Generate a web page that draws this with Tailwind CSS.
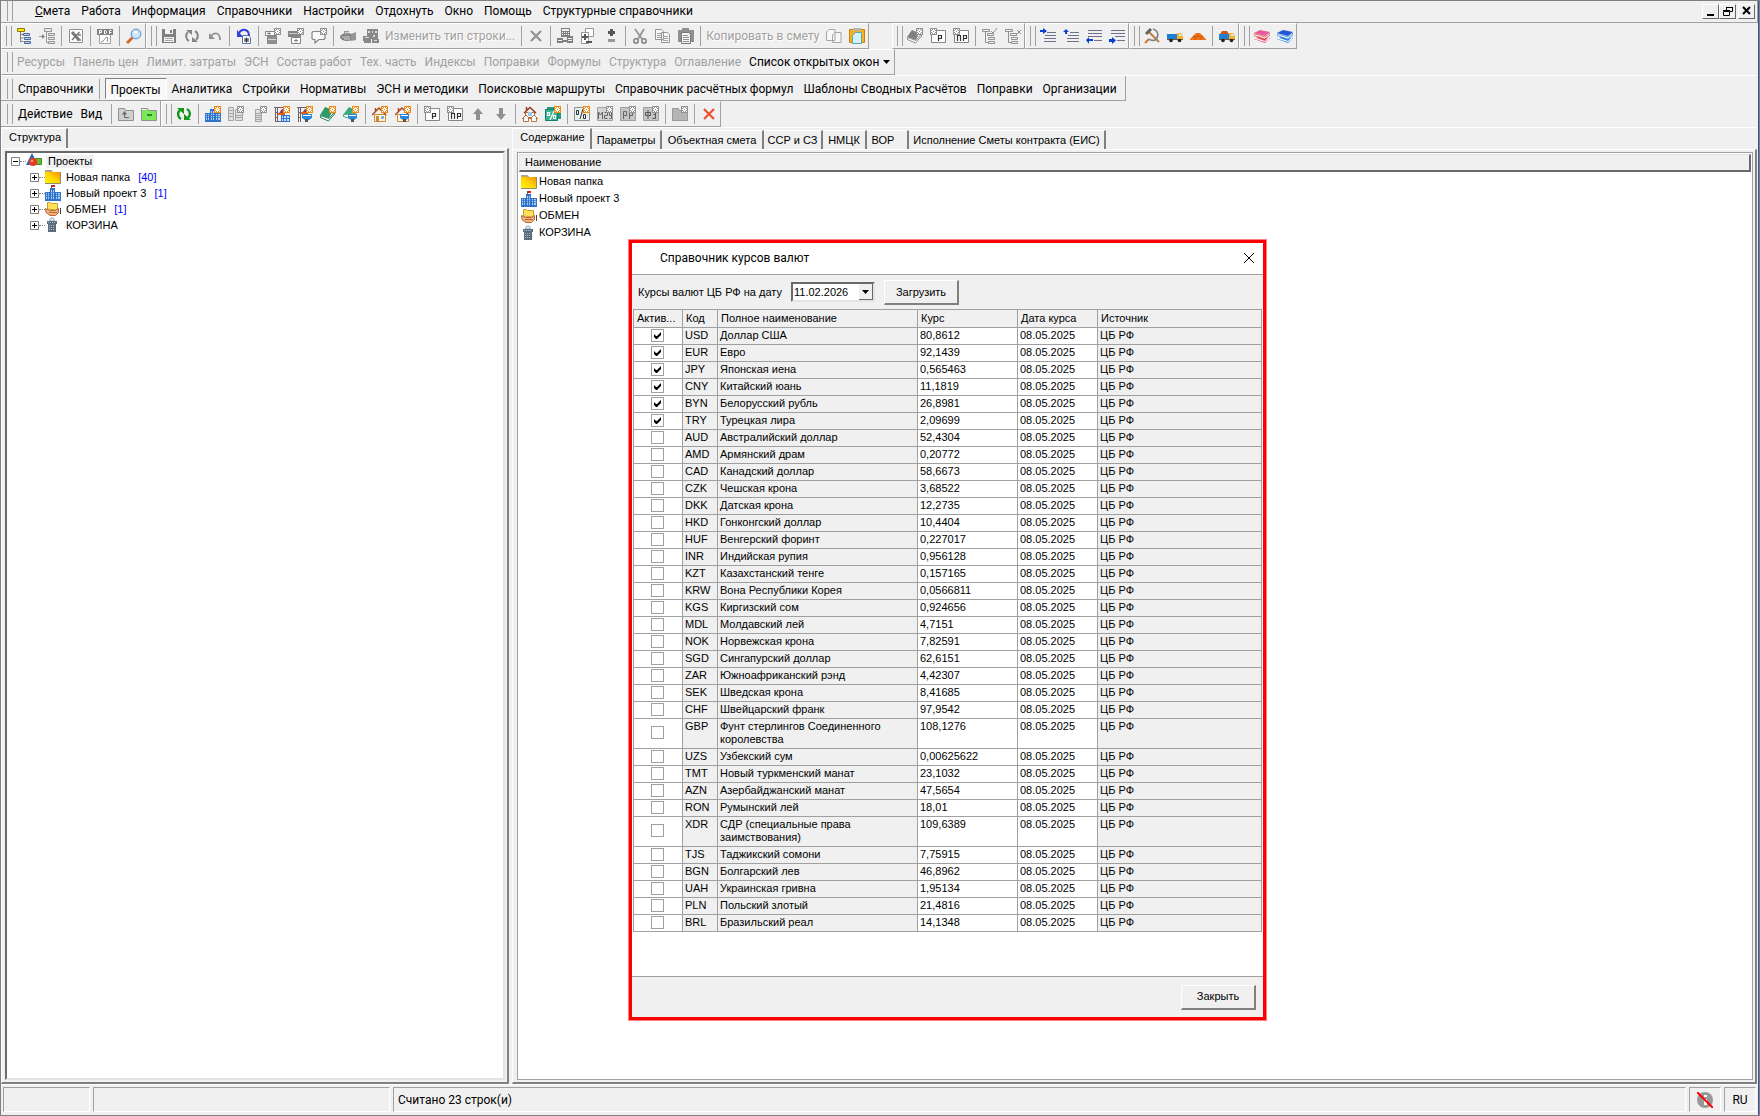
<!DOCTYPE html>
<html lang="ru">

<head>
    <meta charset="UTF-8">
    <meta name="viewport" content="width=device-width, initial-scale=1.0">
    <title>Справочник курсов валют</title>
    <script src="https://cdn.jsdelivr.net/npm/@tailwindcss/browser@4"></script>
</head>

<body class="relative h-screen flex flex-col overflow-hidden bg-[#f0f0f0] text-black border-t border-l border-b border-[#808080] font-[Roboto,'Noto_Sans',sans-serif] text-xs">
    <!-- Icon set -->
    <svg class="absolute size-0" xmlns="http://www.w3.org/2000/svg">
        <symbol id="badge" viewBox="0 0 16 16"><path fill="#f08a10" d="M9 0h7v7H9z"/><path fill="#fff" d="M10 1h1v1h-1zM14 1h1v1h-1zM10 5h1v1h-1zM14 5h1v1h-1zM12 1h1v1h1v1h1v1h-1v1h-1v1h-1v-1h-1v-1h-1v-1h1v-1h1z"/><path fill="#f08a10" d="M12 3h1v1h-1z"/></symbol>
        <symbol id="badge-gray" viewBox="0 0 16 16"><path fill="#929292" d="M9 0h7v7H9z"/><path fill="#fff" d="M10 1h1v1h-1zM14 1h1v1h-1zM10 5h1v1h-1zM14 5h1v1h-1zM12 1h1v1h1v1h1v1h-1v1h-1v1h-1v-1h-1v-1h-1v-1h1v-1h1z"/><path fill="#929292" d="M12 3h1v1h-1z"/></symbol>
        <symbol id="badge-left" viewBox="0 0 16 16"><path fill="#929292" d="M0 0h7v7H0z"/><path fill="#fff" d="M1 1h1v1H1zM5 1h1v1H5zM1 5h1v1H1zM5 5h1v1H5zM3 1h1v1h1v1h1v1H5v1H4v1H3V5H2V4H1V3h1V2h1z"/><path fill="#929292" d="M3 3h1v1H3z"/></symbol>
        <symbol id="tree" viewBox="0 0 16 16"><path fill="#ffe900" stroke="#8a7a10" d="M1.500 .5h7v3h-7z"/><path fill="none" stroke="#808080" d="M4.500 4v9.500h3M4.500 6.500h3M4.500 10h3"/><path fill="#b9d2f5" stroke="#4b6a9a" d="M7.500 5.500h6v2h-6zM8.500 9.500h6v2h-6zM8.500 13.500h6v2h-6z"/></symbol>
        <symbol id="tree-add" viewBox="0 0 16 16"><path fill="#e8e8e8" stroke="#959595" d="M5.500 .5h7v3h-7zM9.500 5.500h6v2h-6zM9.500 9.500h6v2h-6zM9.500 13.500h6v2h-6z"/><path fill="none" stroke="#959595" d="M7.500 4v10.500h2M0 8.500h5"/><path fill="#808080" d="M3 6l3 2.500L3 11z"/></symbol>
        <symbol id="xls" viewBox="0 0 16 16"><path fill="#fff" stroke="#909090" d="M1.500 1.500h13v13h-13z"/><path stroke="#777" stroke-width="3" d="M4 4l7 8"/><path stroke="#777" stroke-width="1.500" d="M11.500 4L4 12M9 12h4M10 7h3"/></symbol>
        <symbol id="pdf" viewBox="0 0 16 16"><path fill="#fff" stroke="#a0a0a0" d="M2.500 5.500h11v10h-11z"/><path fill="#808080" d="M0 1h16v6H0z"/><path fill="none" stroke="#fff" d="M2.500 6V2.500h2v2h-2M7.500 6V2.500h1l1 1v1l-1 1h-1M12.500 6V2.500h2M12.500 4.500h2"/><path fill="none" stroke="#888" d="M4 14c3 0 4-5 6-5s-1 5 1 5"/></symbol>
        <symbol id="find" viewBox="0 0 16 16"><path stroke="#d06a28" stroke-width="3" d="M1 15l6-6"/><circle cx="10" cy="6" r="4.700" fill="#cfe6fb" stroke="#7aa6d8" stroke-width="1.500"/><path fill="#fff" d="M8 3h3v2H8z"/></symbol>
        <symbol id="save" viewBox="0 0 16 16"><path fill="#808080" d="M1 1h14v14H1z"/><path fill="#f4f4f4" d="M4 1h8v5H4zM3 9h10v5H3z"/><path fill="#808080" d="M9 2h2v3H9z"/><path fill="#a8a8a8" d="M4 10h8v1H4zM4 12h8v1H4z"/></symbol>
        <symbol id="refresh-gray" viewBox="0 0 16 16"><path fill="none" stroke="#858585" stroke-width="2" d="M5 13A5.500 5.500 0 0 1 4 4M11 3a5.500 5.500 0 0 1 1 9"/><path fill="#858585" d="M2 2h6v5zM14 14H8V9z"/></symbol>
        <symbol id="refresh" viewBox="0 0 16 16"><path fill="none" stroke="#17961c" stroke-width="2.400" d="M5 13A5.500 5.500 0 0 1 4 4M11 3a5.500 5.500 0 0 1 1 9"/><path fill="#17961c" d="M1 2h7v6zM15 14H8V8z"/></symbol>
        <symbol id="undo" viewBox="0 0 16 16"><path fill="none" stroke="#909090" stroke-width="1.800" d="M4 8c3-4 9-4 9 4"/><path fill="#909090" d="M2 5v6h6z"/></symbol>
        <symbol id="undo-doc" viewBox="0 0 16 16"><path fill="#fff" stroke="#5577aa" d="M6.500 7.500h6l2 2v6h-8z"/><path stroke="#333" d="M8.500 10l4 4M12.500 10l-4 4M10.500 9.500v5M8 12h5"/><path fill="none" stroke="#3040d8" stroke-width="2" d="M3 5c3-5 10-4 10 3"/><path fill="#3040d8" d="M1 2v7h6z"/></symbol>
        <symbol id="rows-top" viewBox="0 0 16 16"><path fill="#fff" stroke="#858585" d="M.5 3.500h11v4H.5z"/><path stroke="#858585" d="M2 5.500h4M4 4v3"/><path fill="#909090" stroke="#858585" d="M2.500 8.500h9v7h-9z"/><path stroke="#d8d8d8" d="M3 11.500h8"/><use href="#badge-gray"/></symbol>
        <symbol id="rows-sub" viewBox="0 0 16 16"><path fill="#858585" d="M0 3h13v6H0z"/><path stroke="#c8c8c8" d="M1 5.500h11"/><path fill="#fff" stroke="#858585" d="M3.500 9.500h9v6h-9z"/><path stroke="#858585" d="M6 12.500h4M8 10.500v4"/><use href="#badge-gray"/></symbol>
        <symbol id="note" viewBox="0 0 16 16"><path fill="#f8f8f8" stroke="#858585" stroke-width="1.200" d="M2 3.500h11l1 1v6l-1 1H8L4 15v-3.500H2l-1-1v-6z"/><use href="#badge-gray"/></symbol>
        <symbol id="helmet" viewBox="0 0 16 16"><ellipse cx="7" cy="9" rx="7" ry="4" fill="#808080"/><path fill="#959595" d="M4 3h5v4H4zM11 6l5-2v8l-5 1z"/><path stroke="#d8d8d8" d="M2 9h8M4 11h6M5 4.500h4"/></symbol>
        <symbol id="works" viewBox="0 0 16 16"><path fill="#888" d="M4 1h11v10H4zM0 8h8v5H0zM9 11h7v4H9zM1 13h7v2H1z"/><path fill="#ddd" d="M5 3h2v2H5zM9 3h1v2H9zM12 3h2v2h-2zM10 7h2v2h-2zM2 9h4v1H2zM11 12h3v1h-3z"/></symbol>
        <symbol id="cross-gray" viewBox="0 0 16 16"><path stroke="#909090" stroke-width="2" d="M3 3l10 10M13 3L3 13"/></symbol>
        <symbol id="cross-red" viewBox="0 0 16 16"><path stroke="#ee4f30" stroke-width="2.200" d="M3 3l10 10M13 3L3 13"/></symbol>
        <symbol id="calc" viewBox="0 0 16 16"><path fill="#808080" d="M4 0h9v9H4zM0 10h6v5H0zM10 8h6v7h-6zM6 12h4v2H6z"/><path fill="#f0f0f0" d="M5 1h7v2H5zM5 4h1v1H5zM7 4h1v1H7zM9 4h1v1H9zM11 4h1v1h-1zM5 6h1v1H5zM7 6h1v1H7zM9 6h1v1H9zM11 6h1v1h-1zM1 12h4v1H1zM11 10h4v1h-4zM11 12h4v1h-4z"/></symbol>
        <symbol id="doc-pm" viewBox="0 0 16 16"><path fill="#fff" stroke="#959595" d="M5.500 .5h8v8h-8z"/><path fill="#fff" stroke="#959595" d="M1.500 4.500h7v11h-7z"/><path stroke="#555" stroke-width="2" d="M2 9h6M5 6v6M6 14h6"/></symbol>
        <symbol id="plus-minus" viewBox="0 0 16 16"><path fill="#555" d="M7 1h3v2h2v3h-2v2H7V6H5V3h2z"/><path fill="#999" d="M5 11h7v3H5z"/></symbol>
        <symbol id="cut" viewBox="0 0 16 16"><path stroke="#959595" stroke-width="1.800" d="M3 1l7 10M12 1L6 11"/><g fill="none" stroke="#808080" stroke-width="1.500"><circle cx="4" cy="13" r="2.200"/><circle cx="12" cy="13" r="2.200"/></g></symbol>
        <symbol id="copy" viewBox="0 0 16 16"><path fill="#f8f8f8" stroke="#959595" d="M.5 1.500h6l2 2v8h-8zM6.500 4.500h6l2 2v8h-8z"/><path stroke="#a0a0a0" d="M2 5.500h4M2 7.500h4M2 9.500h4M8 8.500h5M8 10.500h5M8 12.500h5"/></symbol>
        <symbol id="paste-gray" viewBox="0 0 16 16"><path fill="#909090" d="M0 2h4V0h7v2h5v12H0z"/><path fill="#f4f4f4" stroke="#777" d="M3.500 4.500h7l2 2v9h-9z"/><path stroke="#909090" d="M5 7.500h5M5 9.500h6M5 11.500h6M5 13.500h6"/></symbol>
        <symbol id="copy-plain" viewBox="0 0 16 16"><path fill="#f8f8f8" stroke="#a5a5a5" d="M.5 4l2.500-2.500h6v11H.5zM6.500 7l2.500-2.500h6v10H6.500z"/></symbol>
        <symbol id="paste" viewBox="0 0 16 16"><path fill="#f7b11c" stroke="#c9820c" d="M.5 1.500h15v13H.5z"/><path fill="#b8b8a8" d="M4 0h8v3H4z"/><path fill="#d4f2f6" stroke="#5aa7b8" d="M3.500 7.500l3-3h6v11h-9z"/></symbol>
        <symbol id="book-gray" viewBox="0 0 16 16"><path fill="#808080" d="M5 2l7 3-3 7-9-3z"/><path fill="#fff" stroke="#909090" d="M.5 9.500v2l8 3.500 6-7v-2L9 12.500z"/><use href="#badge-gray"/></symbol>
        <symbol id="box-p" viewBox="0 0 16 16"><path fill="#fff" stroke="#858585" d="M1.500 2.500h14v12h-14z"/><path fill="none" stroke="#333" stroke-width="1.200" d="M8.500 13V7.500h3v3h-3"/><use href="#badge-left"/></symbol>
        <symbol id="box-pr" viewBox="0 0 16 16"><path fill="#fff" stroke="#858585" d="M1.500 2.500h14v12h-14z"/><path fill="none" stroke="#333" stroke-width="1.200" d="M4.500 13V7.500h3V13M10.500 13V7.500h3v3h-3"/><use href="#badge-left"/></symbol>
        <symbol id="tree-ok" viewBox="0 0 16 16"><path fill="#f4f4f4" stroke="#909090" d="M.5 1.500h7v2h-7zM5.500 5.500h6v2h-6zM6.500 9.500h6v2h-6zM6.500 13.500h6v2h-6z"/><path fill="none" stroke="#909090" d="M3.500 4v10.500h3M9 3l2 2 4-5"/></symbol>
        <symbol id="tree-no" viewBox="0 0 16 16"><path fill="#f4f4f4" stroke="#909090" d="M.5 1.500h7v2h-7zM5.500 5.500h6v2h-6zM6.500 9.500h6v2h-6zM6.500 13.500h6v2h-6z"/><path fill="none" stroke="#909090" d="M3.500 4v10.500h3M12 2l4 4M16 2l-4 4"/></symbol>
        <symbol id="ln-1" viewBox="0 0 16 16"><path stroke="#70708a" d="M7 4.500h9M5 7.500h11M4 10.500h12M4 13.500h12"/><path fill="#0a3fd0" d="M0 2h3V0l4 3-4 3V4H0z"/></symbol>
        <symbol id="ln-2" viewBox="0 0 16 16"><path stroke="#70708a" d="M7 4.500h9M5 7.500h11M4 10.500h12M4 13.500h12"/><path fill="#0a3fd0" d="M3 1l3 3H4v2H2V4H0z"/></symbol>
        <symbol id="ln-3" viewBox="0 0 16 16"><path stroke="#70708a" d="M2 2.500h14M2 5.500h14M2 8.500h14M8 12.500h8"/><path fill="#0a3fd0" d="M0 12l3-3v2h4v2H3v3z"/></symbol>
        <symbol id="ln-4" viewBox="0 0 16 16"><path stroke="#70708a" d="M2 2.500h14M2 5.500h14M6 8.500h10M8 12.500h8"/><path fill="#0a3fd0" d="M7 12.500L3 9v2H0v3h3v2z"/></symbol>
        <symbol id="tools" viewBox="0 0 16 16"><path stroke="#c47a3a" stroke-width="2" d="M5 4l10 10"/><path fill="none" stroke="#7c8488" stroke-width="1.600" d="M9 1c6 2 6 8 2 11-2 1-5 0-6-1"/><path stroke="#5c6468" stroke-width="3" d="M2 6l5-5"/><path stroke="#c47a3a" stroke-width="2" d="M5 11l-4 4"/></symbol>
        <symbol id="truck" viewBox="0 0 16 16"><path fill="#1f7fd6" d="M0 6h10v5H0z"/><path fill="#f6b42c" d="M10 5h4l2 3v3h-6z"/><path fill="#cfeaff" d="M12 6h2l1 2h-3z"/><path fill="#7d5a20" d="M0 11h16v1H0z"/><g fill="#222"><circle cx="4" cy="12.500" r="1.800"/><circle cx="12.500" cy="12.500" r="1.800"/></g></symbol>
        <symbol id="bricks" viewBox="0 0 16 16"><path fill="#ee7417" d="M6 5h4l3 3 3 3v1H0v-1l3-3z"/><path stroke="#c85a10" d="M3 8.500h10M8 6v2M5 9v3M11 9v3"/></symbol>
        <symbol id="truck-load" viewBox="0 0 16 16"><path fill="#c85a18" d="M1 6l2-3h5l2 3z"/><path fill="#1f7fd6" d="M0 6h10v5H0z"/><path fill="#f6b42c" d="M10 5h4l2 3v3h-6z"/><path fill="#cfeaff" d="M12 6h2l1 2h-3z"/><path fill="#7d5a20" d="M0 11h16v1H0z"/><g fill="#222"><circle cx="4" cy="12.500" r="1.800"/><circle cx="12.500" cy="12.500" r="1.800"/></g></symbol>
        <symbol id="books-red" viewBox="0 0 16 16"><path fill="#e84a68" d="M6 8l10 2-5 5-11-4z"/><path fill="#fff" d="M1 9.500l10 3.500 4-4v2l-4 3-10-3z"/><path fill="#e45a9a" d="M6 2l10 2-5 4L0 5z"/><path fill="#fff" stroke="#e04848" stroke-width=".8" d="M0 5.500L11 9l5-4v2l-5 4L0 7.500z"/></symbol>
        <symbol id="books-blue" viewBox="0 0 16 16"><path fill="#2a8ae0" d="M6 8l10 2-5 5-11-4z"/><path fill="#fff" d="M1 9.500l10 3.500 4-4v2l-4 3-10-3z"/><path fill="#2456d8" d="M6 2l10 2-5 4L0 5z"/><path fill="#fff" stroke="#3a8ad8" stroke-width=".8" d="M0 5.500L11 9l5-4v2l-5 4L0 7.500z"/></symbol>
        <symbol id="folder-up" viewBox="0 0 16 16"><path fill="#cfcfcf" stroke="#909090" d="M.5 14.500v-12h6l1 2h8v10z"/><path fill="none" stroke="#666" d="M11 11.500H6.500V8"/><path fill="#666" d="M6.500 5L9 8.500H4z"/></symbol>
        <symbol id="folder-green" viewBox="0 0 16 16"><path fill="#7be85a" stroke="#909090" d="M.5 14.500v-12h6l1 2h8v10z"/><path fill="#f4f4f4" d="M1 3h5v1H1z"/><path stroke="#20602a" stroke-width="1.500" d="M6 9h5"/></symbol>
        <symbol id="city" viewBox="0 0 16 16"><path fill="#2f74cc" d="M0 7h5v9H0zM5 3h5v13H5zM10 7h6v9h-6z"/><path fill="#a9cdf6" d="M1 8h1v6H1zM3 8h1v6H3zM6 5h1v9H6zM8 5h1v9H8zM11 8h1v6h-1zM13 8h2v6h-2z"/><path stroke="#2f74cc" stroke-width=".7" d="M0 9.500h16M0 11.500h16M5 7.500h5"/></symbol>
        <symbol id="project" viewBox="0 0 16 16"><use href="#city"/><path fill="#555" d="M6 0h1v3H6z"/><path fill="#e01818" d="M7 0h3v2H7z"/></symbol>
        <symbol id="city-new" viewBox="0 0 16 16"><use href="#city"/><use href="#badge"/></symbol>
        <symbol id="blocks" viewBox="0 0 16 16"><path fill="#e0e0e0" stroke="#a5a5a5" d="M.5 1.500h5v13h-5zM7.500 3.500h7v11h-7z"/><path stroke="#a5a5a5" d="M1 4.500h4M1 7.500h4M1 10.500h4M8 9.500h6M8 11.500h6"/><use href="#badge-gray"/></symbol>
        <symbol id="block" viewBox="0 0 16 16"><path fill="#e0e0e0" stroke="#a5a5a5" d="M4.500 3.500h6v12h-6z"/><path stroke="#a5a5a5" d="M5 7.500h5M5 9.500h5M5 11.500h5M5 13.500h5"/><use href="#badge-gray"/></symbol>
        <symbol id="crane" viewBox="0 0 16 16"><path fill="none" stroke="#70606a" d="M1.500 1v15M3.500 1v15M0 1.500h10M1 5l3 3M1 10l3 3M2 15.500h6"/><path fill="#8e3a70" d="M5 7l3-4h2v4z"/><path fill="#e0611a" d="M4 7h7v2H4z"/><path fill="#2f74cc" d="M7 9h9v7H7z"/><path fill="#cfe2fa" d="M8 10h1v2H8zM10 10h2v2h-2zM13 10h2v2h-2zM8 13h1v2H8zM10 13h2v2h-2zM13 13h2v2h-2z"/><use href="#badge"/></symbol>
        <symbol id="crane-db" viewBox="0 0 16 16"><path fill="none" stroke="#70606a" d="M1.500 1v15M3.500 1v15M0 1.500h10M1 5l3 3M1 10l3 3"/><path fill="#8e3a70" d="M5 7l3-4h2v4z"/><path fill="#e0611a" d="M4 6h7v2H4z"/><path fill="#2888e0" d="M5 8h10v4l-3 2H8l-3-2z"/><path fill="#fff" d="M6 9h8v1H6z"/><path fill="#555" d="M8 13h3v3H8z"/><use href="#badge"/></symbol>
        <symbol id="book" viewBox="0 0 16 16"><path fill="#2e9a6a" d="M5 1l8 3-4 8-9-3z"/><path fill="#fff" stroke="#228055" d="M.5 9.500v2l8 3.500 6-7v-2L9 12.500z"/><use href="#badge"/></symbol>
        <symbol id="book-db" viewBox="0 0 16 16"><path fill="#3aa878" d="M6 1l6 3-3 5-9 0z"/><path fill="#fff" stroke="#3aa878" d="M.5 8.500v2l7 2 5-5z"/><path fill="#2888e0" d="M5 8h9v4l-3 2H8l-3-2z"/><path fill="#fff" d="M6 9h7v1H6z"/><path fill="#555" d="M8 13h3v3H8z"/><use href="#badge"/></symbol>
        <symbol id="house" viewBox="0 0 16 16"><path fill="#fff6dc" stroke="#c98a3a" d="M2.500 8.500h11v7h-11z"/><path fill="none" stroke="#a84820" stroke-width="1.500" d="M0 9l7-7 7 7M3.500 2v3"/><path fill="#c98a3a" d="M4 10h3v6H4z"/><path fill="#7ab4ea" d="M9 10h3v3H9z"/><use href="#badge"/></symbol>
        <symbol id="house-db" viewBox="0 0 16 16"><path fill="#fff6dc" stroke="#c98a3a" d="M2.500 8.500h11v7h-11z"/><path fill="none" stroke="#a84820" stroke-width="1.500" d="M0 9l7-7 7 7M3.500 2v3"/><path fill="#2888e0" d="M5 8h9v4l-3 2H8l-3-2z"/><path fill="#fff" d="M6 9h7v1H6z"/><path fill="#555" d="M8 13h3v3H8z"/><use href="#badge"/></symbol>
        <symbol id="up" viewBox="0 0 16 16"><path fill="#909090" d="M8 2l5 6h-3v6H6V8H3z"/></symbol>
        <symbol id="down" viewBox="0 0 16 16"><path fill="#909090" d="M8 14L3 8h3V2h4v6h3z"/></symbol>
        <symbol id="houses" viewBox="0 0 16 16"><path fill="#fff" stroke="#b8743c" d="M3.500 6.500h9v5h-9z"/><path fill="none" stroke="#8e3a20" stroke-width="1.500" d="M2 7l6-5.500L14 7M4.500 1v3"/><path fill="#9ac8f0" d="M6 6h4v4H6z"/><path fill="#fff" stroke="#b8743c" d="M1.500 12v3.500h5V12M9.500 12v3.500h5V12M0 13l4-4 4 4 4-4 4 4"/></symbol>
        <symbol id="pct-green" viewBox="0 0 16 16"><path fill="#1f9a80" d="M2 1h14v12H2z"/><path fill="#38b498" stroke="#14806a" d="M.5 3.500h12v11H.5z"/><path stroke="#fff" stroke-width="1.200" fill="none" d="M9 5l-4 9M2.500 6.500h2v3h-2zM8.500 9.500h2v3h-2z"/><use href="#badge"/></symbol>
        <symbol id="pct" viewBox="0 0 16 16"><path fill="#e4f2f2" stroke="#909090" d="M.5 1.500h15v13H.5z"/><path stroke="#333" fill="none" d="M9 3l-3 10M2.500 4.500h2v4h-2zM9.500 8.500h2v4h-2z"/><use href="#badge"/></symbol>
        <symbol id="m29" viewBox="0 0 16 16"><path fill="#d4d4d4" stroke="#a0a0a0" d="M.5 1.500h15v13H.5z"/><path fill="none" stroke="#666" d="M1.500 13V6l2 3 2-3v7M7.500 6.500h3v3h-3v3h3M14.500 9.500h-2v-3h2v6h-2"/><use href="#badge-gray"/></symbol>
        <symbol id="rr" viewBox="0 0 16 16"><path fill="#c4c4c4" stroke="#a0a0a0" d="M.5 1.500h15v13H.5z"/><path fill="none" stroke="#666" d="M3.500 13V5.500h3v4h-3M9.500 13V5.500h3v4h-3"/><use href="#badge-gray"/></symbol>
        <symbol id="f3" viewBox="0 0 16 16"><path fill="#c4c4c4" stroke="#a0a0a0" d="M.5 1.500h15v13H.5z"/><path fill="none" stroke="#555" d="M2.500 6.500h5v3h-5zM5 4v9M9.500 5.500h3v3h-2M12.500 8v4.500h-3"/><use href="#badge-gray"/></symbol>
        <symbol id="folder-gray" viewBox="0 0 16 16"><path fill="#b4b4b4" stroke="#989898" d="M.5 14.500v-12h6l1 2h8v10z"/><use href="#badge-gray"/></symbol>
        <linearGradient id="gold" x1="0" y1="1" x2="1" y2="0"><stop offset="0" stop-color="#fff200"/><stop offset=".5" stop-color="#ffd800"/><stop offset="1" stop-color="#ff8a00"/></linearGradient>
        <symbol id="shapes" viewBox="0 0 16 16"><path fill="#2c6ab8" d="M6 0l6 12H0z"/><path fill="#6cba30" stroke="#4a8a20" d="M9.500 5.500h6v6h-6z"/><circle cx="7" cy="9" r="4" fill="#e83a20"/><circle cx="6" cy="8" r="1.200" fill="#ff9a80"/></symbol>
        <symbol id="folder" viewBox="0 0 16 16"><path fill="#ffb400" stroke="#a0a0a0" d="M.5 3V1.500h6L7.500 3z"/><path fill="url(#gold)" d="M0 3h15v12H0z"/><path fill="none" stroke="#8c8c70" d="M0 14.500h15.500V3"/></symbol>
        <symbol id="exchange" viewBox="0 0 16 16"><path fill="#ffe25a" stroke="#c8a030" d="M2.500 8V1.500h3l1 1h6V9z"/><path fill="#f2b27a" stroke="#b8683a" d="M.5 7.500l4 2h6l3-2v4l-3 3H5l-4-3z"/><path stroke="#b8683a" d="M4 11.500h8"/><path fill="#444" d="M15 7h1v6h-1z"/></symbol>
        <symbol id="bin" viewBox="0 0 16 16"><path fill="#dcecf8" stroke="#9ab0c0" d="M4.500 4l1-3h3l1 3z"/><path fill="#5c6c7c" d="M2 4h10v3h-1v8H3V7H2z"/><path stroke="#a8b8c4" stroke-dasharray="1 1" d="M4 8.500h6M4 10.500h6M4 12.500h6M3 5.500h8"/></symbol>
    </svg>

    <!-- Menu -->
    <header class="flex items-center h-[22px] shrink-0 mr-0.5 border-b border-r border-[#a0a0a0] pl-1.5 pb-px">
        <span class="w-1.5 h-5 border-x border-[#a0a0a0] mr-[22px]"></span>
        <nav id="menu" class="flex gap-[11px] whitespace-nowrap" aria-label="Главное меню"></nav>
        <div class="ml-auto flex mr-0.5">
            <button aria-label="Свернуть" class="w-[17px] h-[15px] grid place-items-center border border-t-white border-l-white border-r-[#696969] border-b-[#696969]">
                <svg class="w-2.5 h-2.5" viewBox="0 0 10 10"><path d="M1 8h7v2H1z"/></svg></button>
            <button aria-label="Восстановить" class="w-[17px] h-[15px] grid place-items-center border border-t-white border-l-white border-r-[#696969] border-b-[#696969]">
                <svg class="w-2.5 h-2.5" viewBox="0 0 10 10"><path fill="none" stroke="#000" d="M3.500 4V1.500h6v4H7M3 1.500h7M.5 5.500h6v4h-6zM0 4.500h7"/></svg></button>
            <button aria-label="Закрыть окно" class="ml-0.5 w-[17px] h-[15px] grid place-items-center border border-t-white border-l-white border-r-[#696969] border-b-[#696969]">
                <svg class="w-2.5 h-2.5" viewBox="0 0 10 10"><path stroke="#000" stroke-width="2" d="M1 1l7 7M8 1L1 8"/></svg></button>
        </div>
    </header>

    <!-- Toolbars -->
    <div class="flex h-[26px] shrink-0">
        <div data-bar="tree tree-add | xls | pdf | find"></div>
        <div data-bar="save refresh-gray undo | undo-doc | rows-top rows-sub note | helmet works =Изменить_тип_строки... | cross-gray | calc doc-pm plus-minus | cut copy paste-gray | =Копировать_в_смету copy-plain paste"></div>
        <div class="w-[23px]"></div>
        <div data-bar="book-gray box-p box-pr | tree-ok tree-no"></div>
        <div data-bar="ln-1 ln-2 ln-3 ln-4"></div>
        <div data-bar="tools truck bricks | truck-load"></div>
        <div data-bar="books-red books-blue"></div>
    </div>
    <div class="flex h-[26px] shrink-0 whitespace-nowrap">
        <div class="flex items-center border border-[#a0a0a0] border-t-white border-l-white pl-[5px] pr-1">
            <span class="w-1.5 h-5 border-x border-[#a0a0a0] mr-1"></span>
            <div id="windows" class="flex gap-2 text-[#a0a0a0] [text-shadow:1px_1px_0_#fff]"></div>
            <button class="ml-2 flex items-center gap-1">Список открытых окон
                <svg class="w-[7px] h-1" viewBox="0 0 7 4"><path d="M0 0h7L3.500 4z"/></svg></button>
        </div>
    </div>
    <div class="flex h-[26px] shrink-0 whitespace-nowrap border-t border-white">
        <div class="flex items-center border-r border-b border-[#a0a0a0] pl-1.5 pt-px pr-2">
            <span class="w-1.5 h-5 border-x border-[#a0a0a0] mr-[5px]"></span>
            <button>Справочники</button>
            <span class="mx-[5px] w-px h-5 bg-[#a0a0a0]"></span>
            <button class="h-[21px] w-[62px] pt-0.5 border border-t-[#808080] border-l-[#808080] border-r-white border-b-white bg-[#f8f8f8]">Проекты</button>
            <div id="sections" class="ml-[5px] flex gap-2.5"></div>
        </div>
    </div>
    <div class="flex h-[26px] shrink-0 whitespace-nowrap">
        <div class="flex items-center border-r border-b border-[#a0a0a0] pl-1.5 w-40">
            <span class="w-1.5 h-5 border-x border-[#a0a0a0] mr-[5px]"></span>
            <button>Действие</button>
            <button class="ml-2">Вид</button>
            <span class="ml-auto mr-0.5 w-px h-5 bg-[#a0a0a0]"></span>
            <div data-icons="folder-up folder-green"></div>
        </div>
        <div data-bar="refresh | city-new blocks block crane crane-db book book-db | house house-db | box-p box-pr up down | houses pct-green | pct m29 rr f3 | folder-gray | cross-red"></div>
    </div>

    <!-- Work area -->
    <main class="flex-1 min-h-0 flex gap-[3px] mr-[3px] border-t border-white font-['Liberation_Sans',Arial,sans-serif] text-[11px] leading-[13px]">
        <section class="w-[508px] shrink-0 flex flex-col">
            <div class="flex h-5">
                <button class="w-[67px] pb-0.5 pl-0.5 border-l border-t border-white border-r-2 border-r-[#808080]">Структура</button>
            </div>
            <div class="flex-1 min-h-0 flex border border-white border-r-2 border-b-2 border-r-[#808080] border-b-[#808080] p-0.5 pl-[3px]">
                <ul id="tree-list" class="flex-1 bg-white border-2 border-[#e3e3e3] border-t-[#696969] border-l-[#696969]"></ul>
            </div>
        </section>
        <section class="flex-1 min-w-0 flex flex-col">
            <div id="tabs" class="flex h-[21px] items-end whitespace-nowrap"></div>
            <div class="flex-1 min-h-0 flex border border-white border-r-2 border-b-2 border-r-[#808080] border-b-[#808080] p-0.5 pl-1">
                <div class="flex-1 bg-white border border-[#a0a0a0] p-px">
                    <div class="h-[18px] pl-[5px] flex items-center bg-[#f0f0f0] border border-[#e3e3e3] border-b-2 border-b-[#696969] border-r-2 border-r-[#696969]">Наименование</div>
                    <ul id="content-list" class="pt-px"></ul>
                </div>
            </div>
        </section>
    </main>

    <!-- Status bar -->
    <footer class="h-[31px] shrink-0 flex gap-[3px] p-0.5 pb-[3px] mr-0.5 border-t border-white whitespace-nowrap">
        <div class="w-[87px] shrink-0 border border-[#a0a0a0] border-r-white border-b-white"></div>
        <div class="w-[297px] shrink-0 border border-[#a0a0a0] border-r-white border-b-white"></div>
        <div class="flex-1 flex items-center pl-1 border border-[#a0a0a0] border-r-white border-b-white">Считано 23 строк(и)</div>
        <div class="w-8 grid place-items-center border border-[#a0a0a0] border-r-white border-b-white">
            <svg class="size-4" viewBox="0 0 16 16"><circle cx="8" cy="8" r="8" fill="#989898"/><path fill="#fff" d="M7 3h3v2H7zM6 7h4v6H7V8H6z"/><path stroke="#f00" stroke-width="2" d="M0 0l16 16"/></svg>
        </div>
        <div class="w-8 grid place-items-center border border-[#a0a0a0] border-r-white border-b-white">RU</div>
    </footer>
    <div class="absolute right-0 inset-y-0 w-0.5 bg-[#808080] border-l border-[#2b579a]"></div>

    <!-- Currency rates dialog -->
    <div role="dialog" aria-labelledby="dlg-title" class="absolute left-[628px] top-[239px] w-[637px] bg-[#f0f0f0] border-3 border-[#ff0000] shadow-[0_0_0_1px_#ff8080] font-['Liberation_Sans',Arial,sans-serif] text-[11px] leading-[13px]">
        <div class="h-8 flex items-center justify-between pl-7 pr-1.5 pb-0.5 bg-white border-b border-[#a0a0a0]">
            <h1 id="dlg-title" class="font-[Roboto,'Noto_Sans',sans-serif] text-xs">Справочник курсов валют</h1>
            <button aria-label="Закрыть диалог" class="size-4 grid place-items-center"><svg class="size-3" viewBox="0 0 12 12"><path stroke="#000" d="M1 1l10 10M11 1L1 11"/></svg></button>
        </div>
        <div class="h-[34px] flex items-center pl-1.5">
            <label for="rate-date" class="w-[153px]">Курсы валют ЦБ РФ на дату</label>
            <div class="flex w-[84px] h-5 bg-white border-2 border-[#e3e3e3] border-t-[#696969] border-l-[#696969]">
                <input id="rate-date" value="11.02.2026" class="w-[66px] pl-px outline-none">
                <button aria-label="Выбрать дату" class="flex-1 grid place-items-center bg-[#f0f0f0] border-r border-b border-[#696969]"><svg class="w-[7px] h-1" viewBox="0 0 7 4"><path d="M0 0h7L3.500 4z"/></svg></button>
            </div>
            <button class="ml-[9px] mt-px w-[75px] h-[25px] border border-white border-r-2 border-b-2 border-r-[#808080] border-b-[#808080]">Загрузить</button>
        </div>
        <div class="h-[667px] bg-white px-px">
            <table class="w-full table-fixed border-collapse">
                <colgroup>
                    <col class="w-[49px]">
                    <col class="w-[35px]">
                    <col class="w-[200px]">
                    <col class="w-[100px]">
                    <col class="w-20">
                    <col>
                </colgroup>
                <thead id="rates-head"></thead>
                <tbody id="rates"></tbody>
            </table>
        </div>
        <div class="h-[41px] flex items-center justify-end pr-[7px] border-t border-[#a0a0a0]">
            <button class="w-[75px] h-[25px] border border-white border-r-2 border-b-2 border-r-[#808080] border-b-[#808080]">Закрыть</button>
        </div>
    </div>

    <script>
        const icon = name => `<svg class="size-4 shrink-0"><use href="#${name}"/></svg>`;

        // Toolbar items: icon name, "|" separator, "=" caption
        function barItems(list) {
            return list.split(' ').map(item => {
                if (item === '|') return '<span class="w-1.5 h-5 grid place-items-center"><span class="w-px h-5 bg-[#a0a0a0]"></span></span>';
                if (item[0] === '=') return `<button disabled class="px-[3px] text-[#a0a0a0] whitespace-nowrap [text-shadow:1px_1px_0_#fff]">${item.slice(1).replaceAll('_', ' ')}</button>`;
                return `<button aria-label="${item}" class="w-[23px] h-[22px] grid place-items-center">${icon(item)}</button>`;
            }).join('');
        }

        document.querySelectorAll('[data-bar]').forEach(el => {
            el.className = 'flex items-center border border-[#a0a0a0] border-t-white border-l-white pl-1';
            el.innerHTML = '<span class="w-1.5 h-5 border-x border-[#a0a0a0]"></span>' + barItems(el.dataset.bar);
        });
        document.querySelectorAll('[data-icons]').forEach(el => {
            el.className = 'flex';
            el.innerHTML = barItems(el.dataset.icons);
        });

        const buttons = names => names.map(n => `<button>${n}</button>`).join('');
        document.getElementById('menu').innerHTML = '<button><u>С</u>мета</button>' + buttons(['Работа', 'Информация', 'Справочники', 'Настройки', 'Отдохнуть', 'Окно', 'Помощь', 'Структурные справочники']);
        document.getElementById('windows').innerHTML = buttons(['Ресурсы', 'Панель цен', 'Лимит. затраты', 'ЭСН', 'Состав работ', 'Тех. часть', 'Индексы', 'Поправки', 'Формулы', 'Структура', 'Оглавление']);
        document.getElementById('sections').innerHTML = buttons(['Аналитика', 'Стройки', 'Нормативы', 'ЭСН и методики', 'Поисковые маршруты', 'Справочник расчётных формул', 'Шаблоны Сводных Расчётов', 'Поправки', 'Организации']);

        const tabs = [
            ['Параметры', 'w-[70px]'], ['Объектная смета', 'w-[102px]'], ['ССР и СЗ', 'w-[59px]'],
            ['НМЦК', 'w-11'], ['ВОР', 'w-[42px] pr-2'], ['Исполнение Сметы контракта (ЕИС)', 'w-[197px]'],
        ];
        document.getElementById('tabs').innerHTML = '<button class="h-[21px] pb-1 pl-0.5 w-20 border-t border-l border-white border-r-2 border-r-[#808080]">Содержание</button>' +
            tabs.map(([name, w]) => `<button class="h-[19px] ${w} border-t border-white border-r-2 border-r-[#808080]">${name}</button>`).join('');

        // Project tree
        const box = open => `<button aria-label="${open ? 'Свернуть ветку' : 'Развернуть ветку'}" class="size-[9px] shrink-0"><svg class="size-[9px]" viewBox="0 0 9 9"><path fill="#fff" stroke="#808080" d="M.5 .5h8v8h-8z"/><path stroke="#000" d="${open ? 'M2 4.500h5' : 'M2 4.500h5M4.500 2v5'}"/></svg></button>`;
        const nodes = [
            ['folder', 'Новая папка', '[40]'],
            ['project', 'Новый проект 3', '[1]'],
            ['exchange', 'ОБМЕН', '[1]'],
            ['bin', 'КОРЗИНА', ''],
        ];
        document.getElementById('tree-list').innerHTML =
            `<li class="flex items-center h-4 pl-1">${box(true)}<span class="w-1.5 border-t border-dotted border-[#808080]"></span>${icon('shapes')}<span class="ml-1 px-0.5 bg-[#f0f0f0]">Проекты</span></li>` +
            nodes.map(([img, name, count]) => `
                <li class="flex items-center h-4 pl-[23px]">${box(false)}<span class="w-1.5 border-t border-dotted border-[#808080]"></span>${icon(img)}
                    <span class="ml-[5px]">${name}</span><span class="ml-2 text-[#0000ff]">${count}</span>
                </li>`).join('');
        document.getElementById('content-list').innerHTML =
            nodes.map(([img, name]) => `<li class="flex items-center h-[17px] pl-0.5 gap-0.5">${icon(img)}${name}</li>`).join('');

        // Currency rates
        const rates = [
            ['USD', 'Доллар США', '80,8612'], ['EUR', 'Евро', '92,1439'], ['JPY', 'Японская иена', '0,565463'],
            ['CNY', 'Китайский юань', '11,1819'], ['BYN', 'Белорусский рубль', '26,8981'], ['TRY', 'Турецкая лира', '2,09699'],
            ['AUD', 'Австралийский доллар', '52,4304'], ['AMD', 'Армянский драм', '0,20772'], ['CAD', 'Канадский доллар', '58,6673'],
            ['CZK', 'Чешская крона', '3,68522'], ['DKK', 'Датская крона', '12,2735'], ['HKD', 'Гонконгский доллар', '10,4404'],
            ['HUF', 'Венгерский форинт', '0,227017'], ['INR', 'Индийская рупия', '0,956128'], ['KZT', 'Казахстанский тенге', '0,157165'],
            ['KRW', 'Вона Республики Корея', '0,0566811'], ['KGS', 'Киргизский сом', '0,924656'], ['MDL', 'Молдавский лей', '4,7151'],
            ['NOK', 'Норвежская крона', '7,82591'], ['SGD', 'Сингапурский доллар', '62,6151'], ['ZAR', 'Южноафриканский рэнд', '4,42307'],
            ['SEK', 'Шведская крона', '8,41685'], ['CHF', 'Швейцарский франк', '97,9542'], ['GBP', 'Фунт стерлингов Соединенного королевства', '108,1276'],
            ['UZS', 'Узбекский сум', '0,00625622'], ['TMT', 'Новый туркменский манат', '23,1032'], ['AZN', 'Азербайджанский манат', '47,5654'],
            ['RON', 'Румынский лей', '18,01'], ['XDR', 'СДР (специальные права заимствования)', '109,6389'], ['TJS', 'Таджикский сомони', '7,75915'],
            ['BGN', 'Болгарский лев', '46,8962'], ['UAH', 'Украинская гривна', '1,95134'], ['PLN', 'Польский злотый', '21,4816'], ['BRL', 'Бразильский реал', '14,1348'],
        ];
        document.getElementById('rates-head').innerHTML = '<tr class="bg-[#f0f0f0]">' +
            ['Актив...', 'Код', 'Полное наименование', 'Курс', 'Дата курса', 'Источник'].map(h =>
                `<th class="h-[18px] p-0 pl-[3px] border border-[#a0a0a0] text-left font-normal whitespace-nowrap">${h}</th>`).join('') + '</tr>';
        document.getElementById('rates').innerHTML = rates.map(([code, name, rate], i) => `
            <tr class="align-top">
                <td class="border border-[#a0a0a0] p-0 pr-0.5 pb-0.5 align-middle">
                    <label class="grid place-items-center h-[13px]">
                        <input type="checkbox" aria-label="${code}" ${i < 6 ? 'checked' : ''} class="peer [grid-area:1/1] appearance-none size-[13px] border border-[#a0a0a0]">
                        <svg class="hidden peer-checked:block [grid-area:1/1] w-[7px] h-[7px]" viewBox="0 0 7 7"><path d="M0 2v3l2 2h1l4-4V0L3 4H2z"/></svg>
                    </label>
                </td>
                <td class="border border-[#a0a0a0] px-0.5 pt-px pb-0.5 bg-[#f0f0f0]">${code}</td>
                <td class="border border-[#a0a0a0] px-0.5 pt-px pb-0.5 bg-[#f0f0f0]">${name}</td>
                <td class="border border-[#a0a0a0] px-0.5 pt-px pb-0.5">${rate}</td>
                <td class="border border-[#a0a0a0] px-0.5 pt-px pb-0.5">08.05.2025</td>
                <td class="border border-[#a0a0a0] px-0.5 pt-px pb-0.5 bg-[#f0f0f0]">ЦБ РФ</td>
            </tr>`).join('');
    </script>
</body>

</html>
